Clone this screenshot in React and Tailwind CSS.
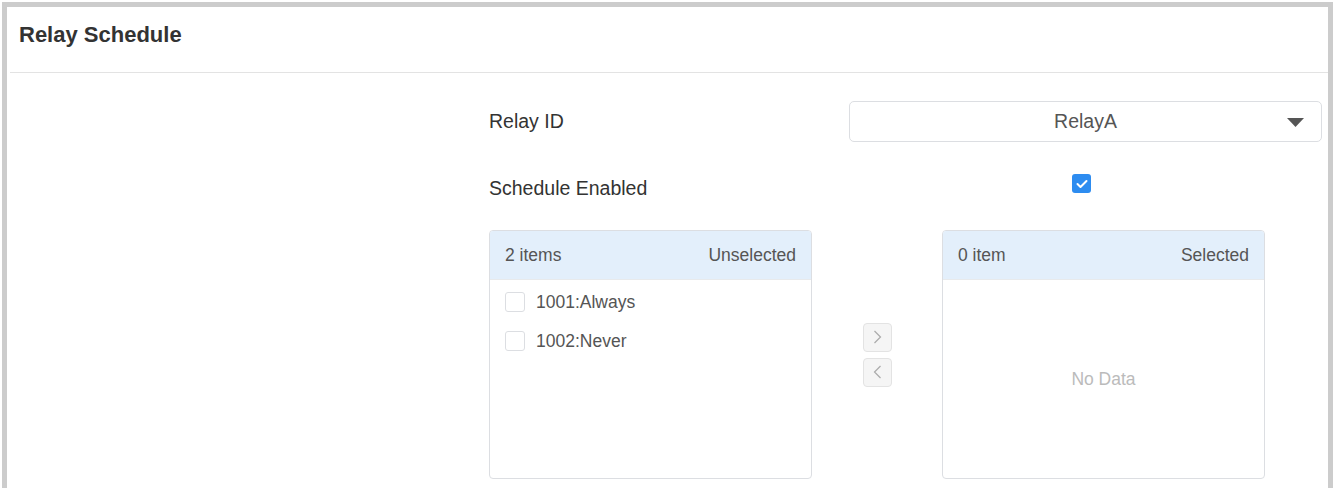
import React, { useState } from 'react';

const TransferPanel = ({ count, title, items, checked, onToggle }) => (
  <div className="w-[323px] h-[249px] border border-[#dcdee2] rounded-[4px] flex flex-col overflow-hidden">
    <div className="h-[49px] shrink-0 bg-[#e3effb] border-b border-[#e8eaec] flex items-center justify-between pl-[15px] pr-[15px] text-[17.5px] text-[#555]">
      <span>{count}</span>
      <span>{title}</span>
    </div>
    {items.length ? (
      <div className="pt-[12px] pl-[15px] flex flex-col gap-[19px]">
        {items.map((item) => (
          <label key={item} className="h-[20px] flex items-center gap-[11px] text-[17.5px] text-[#555] cursor-pointer">
            <span
              onClick={() => onToggle(item)}
              className={`w-[20px] h-[20px] shrink-0 rounded-[3px] border ${checked.includes(item) ? 'bg-[#2d8cf0] border-[#2d8cf0]' : 'border-[#dcdee2] bg-white'}`}
            />
            {item}
          </label>
        ))}
      </div>
    ) : (
      <div className="flex-1 flex items-center justify-center text-[17.5px] text-[#bbb]">No Data</div>
    )}
  </div>
);

export default function App() {
  const [enabled, setEnabled] = useState(true);
  const [checked, setChecked] = useState([]);

  const toggle = (item) =>
    setChecked((c) => (c.includes(item) ? c.filter((i) => i !== item) : [...c, item]));

  return (
    <div className="h-[488px] overflow-hidden bg-white pt-[2px] px-[2px] font-[family-name:Liberation_Sans,Arial,sans-serif]">
      <div className="h-full border-[5px] border-b-0 border-[#cccccc] bg-white">
        <div className="h-[65px] flex items-center pl-[12px] pb-[10px] text-[22px] font-bold text-[#333]">
          Relay Schedule
        </div>
        <div className="ml-[3px] border-b border-[#e3e3e3]" />

        <div className="ml-[482px] w-[833px] pt-[28px]">
          <div className="flex items-center h-[41px]">
            <div className="w-[360px] text-[19.5px] text-[#333]">Relay ID</div>
            <div className="relative w-[473px] h-[41px] border border-[#dcdee2] rounded-[5px] flex items-center justify-center text-[19.5px] text-[#555]">
              RelayA
              <svg className="absolute right-[17px] top-[16px]" width="17" height="9" viewBox="0 0 17 9">
                <path d="M0 0h17L8.5 9z" fill="#555" />
              </svg>
            </div>
          </div>

          <div className="flex items-start h-[40px] mt-[26px]">
            <div className="w-[360px] mt-[9px] leading-[22px] text-[19.5px] text-[#333]">Schedule Enabled</div>
            <div className="w-[473px] flex justify-center pr-[8px] mt-[6px]">
              <button
                onClick={() => setEnabled(!enabled)}
                className={`w-[19px] h-[19px] rounded-[3px] flex items-center justify-center ${enabled ? 'bg-[#2d8cf0]' : 'bg-white border border-[#dcdee2]'}`}
              >
                {enabled && (
                  <svg width="12" height="10" viewBox="0 0 12 10">
                    <path d="M1.5 5l3 3 6-6" fill="none" stroke="#fff" strokeWidth="2" strokeLinecap="round" strokeLinejoin="round" />
                  </svg>
                )}
              </button>
            </div>
          </div>

          <div className="flex items-center mt-[22px]">
            <TransferPanel
              count="2 items"
              title="Unselected"
              items={['1001:Always', '1002:Never']}
              checked={checked}
              onToggle={toggle}
            />
            <div className="w-[130px] flex flex-col items-center gap-[6px]">
              <button className="w-[29px] h-[29px] rounded-[4px] border border-[#e3e3e3] bg-[#f5f5f5] flex items-center justify-center">
                <svg width="9" height="14" viewBox="0 0 9 14">
                  <path d="M1.5 1l6 6-6 6" fill="none" stroke="#aaa" strokeWidth="1.2" />
                </svg>
              </button>
              <button className="w-[29px] h-[29px] rounded-[4px] border border-[#e3e3e3] bg-[#f5f5f5] flex items-center justify-center">
                <svg width="9" height="14" viewBox="0 0 9 14">
                  <path d="M7.5 1l-6 6 6 6" fill="none" stroke="#aaa" strokeWidth="1.2" />
                </svg>
              </button>
            </div>
            <TransferPanel count="0 item" title="Selected" items={[]} checked={checked} onToggle={toggle} />
          </div>
        </div>
      </div>
    </div>
  );
}
